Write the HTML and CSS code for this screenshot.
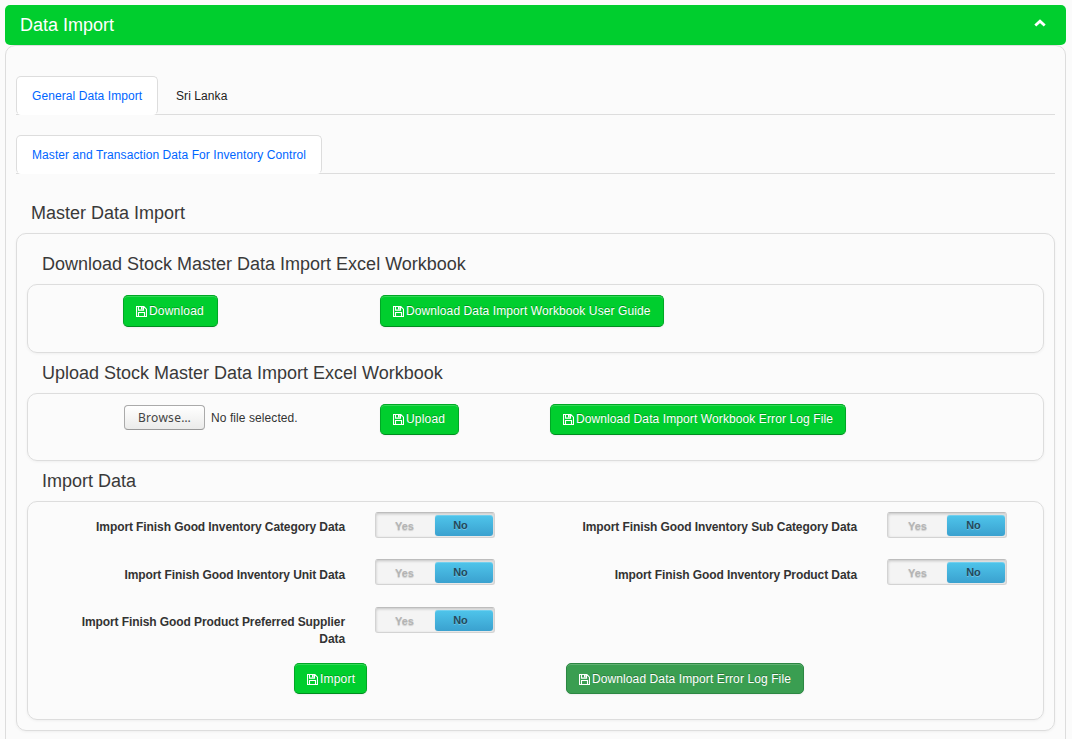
FILE: index.html
```html
<!DOCTYPE html>
<html lang="en">
<head>
<meta charset="utf-8">
<title>Data Import</title>
<link rel="stylesheet" href="styles.css">
</head>
<body>
<svg class="defs" width="0" height="0"><symbol id="save" viewBox="0 0 11 11"><path d="M.5.5h7.3l2.7 2.7v7.3H.5zM2.5.5v3.6h5V.5M2.5 10.5V6.5h6v4" fill="none" stroke="currentColor" stroke-width="1.1"/><path d="M5 1h1.7v2.5H5z" fill="currentColor"/></symbol></svg>
<header class="bar"><h1>Data Import</h1><svg class="chev" viewBox="0 0 12 8"><path d="M1.3 6.6 6 2.2l4.7 4.4" fill="none" stroke="#fff" stroke-width="2.8"/></svg></header>
<main class="panel">
  <nav class="tabs"><a class="tab active t1">General Data Import</a><a class="tab">Sri Lanka</a></nav>
  <nav class="tabs second"><a class="tab active t2">Master and Transaction Data For Inventory Control</a></nav>
  <h2 class="title">Master Data Import</h2>
  <section class="box outer">
    <h3>Download Stock Master Data Import Excel Workbook</h3>
    <div class="box row r1">
      <div class="c1"><button class="btn b1"><svg><use href="#save"/></svg><span>Download</span></button></div>
      <div class="c2"><button class="btn b2"><svg><use href="#save"/></svg><span>Download Data Import Workbook User Guide</span></button></div>
    </div>
    <h3>Upload Stock Master Data Import Excel Workbook</h3>
    <div class="box row r2">
      <div class="c1 file"><button class="browse">Browse…</button><span>No file selected.</span></div>
      <div class="c3"><button class="btn b3"><svg><use href="#save"/></svg><span>Upload</span></button></div>
      <div><button class="btn b4"><svg><use href="#save"/></svg><span>Download Data Import Workbook Error Log File</span></button></div>
    </div>
    <h3>Import Data</h3>
    <div class="box data">
      <div class="fields">
        <label>Import Finish Good Inventory Category Data</label><div class="switch"><span>Yes</span><b>No</b></div>
        <label>Import Finish Good Inventory Sub Category Data</label><div class="switch right"><span>Yes</span><b>No</b></div>
        <label class="low">Import Finish Good Inventory Unit Data</label><div class="switch"><span>Yes</span><b>No</b></div>
        <label class="low">Import Finish Good Inventory Product Data</label><div class="switch right"><span>Yes</span><b>No</b></div>
        <label>Import Finish Good Product Preferred Supplier<br>Data</label><div class="switch"><span>Yes</span><b>No</b></div>
      </div>
      <div class="actions">
        <button class="btn b5"><svg><use href="#save"/></svg><span>Import</span></button>
        <button class="btn b6 dark"><svg><use href="#save"/></svg><span>Download Data Import Error Log File</span></button>
      </div>
    </div>
  </section>
</main>
</body>
</html>
```
FILE: styles.css
```css
* { box-sizing: border-box; }
html { background: #fbfbfb; overflow: hidden; }
body { margin: 0; padding: 5px 6px 0 5px; height: 739px; overflow: hidden; font: 12px/17px "Liberation Sans", Arial, sans-serif; letter-spacing: .08px; color: #333; }
.defs { position: absolute; }
h1, h2, h3 { font-weight: 400; font-size: 18px; line-height: 20px; letter-spacing: 0; margin: 0; color: #393939; white-space: nowrap; }
.bar { height: 40px; background: #00ce2e; border-radius: 5px; display: flex; align-items: center; justify-content: space-between; padding: 0 20px 0 15px; }
.bar h1 { color: #fff; }
.chev { width: 12px; height: 8px; margin-bottom: 4px; }
.panel { border: 1px solid #ddd; border-radius: 10px; padding: 30px 10px 0; height: 720px; }
.tabs { display: flex; height: 39px; border-bottom: 1px solid #ddd; gap: 2px; }
.second { margin-top: 20px; }
.tab { height: 39px; padding: 11px 15px 0; border: 1px solid transparent; white-space: nowrap; color: #222; }
.tab.active { color: #06f; background: #fff; border-color: #ddd; border-bottom-color: #fff; border-radius: 5px; }
.t1 { width: 142px; }
.t2 { width: 306px; }
.title { margin: 29px 0 0 15px; height: 30px; }
.box { border: 1px solid #ddd; border-radius: 10px; box-shadow: 0 1px 3px rgba(0,0,0,.05); }
.outer { height: 498px; padding: 0 10px; }
h3 { height: 40px; padding: 10px 0 0 15px; }
.outer > h3:first-child { height: 50px; padding-top: 20px; }
.row { display: flex; padding-top: 10px; }
.r1 { height: 69px; }
.r2 { height: 68px; }
.c1 { width: 352px; padding-left: 95px; }
.c3 { width: 170px; }
.btn { height: 32px; display: flex; align-items: center; font: 12px/17px "Liberation Sans", Arial, sans-serif; letter-spacing: .1px; color: #fff; background: #00ce2e; border: 1px solid #00a825; border-bottom-color: #008c1f; border-radius: 5px; padding: 0 0 0 12px; gap: 2px; white-space: nowrap; text-shadow: 0 -1px 0 rgba(0,0,0,.25); box-shadow: inset 0 1px 0 rgba(255,255,255,.2), 0 1px 2px rgba(0,0,0,.05); }
.btn svg { width: 11px; height: 11px; flex: none; }
.r2 .btn { height: 31px; padding-bottom: 1px; }
.actions .btn { height: 31px; padding-top: 1px; }
.b1 { width: 95px; }
.b2 { width: 284px; }
.b3 { width: 79px; }
.b4 { width: 296px; }
.b5 { width: 73px; }
.b6 { width: 238px; }
.b1, .b3, .b5 { letter-spacing: .2px; }
.btn.dark { background: #3a9e51; border-color: #2c8743; }
.file { display: flex; align-items: flex-start; gap: 6px; padding: 1px 0 0 96px; }
.file span { padding-top: 5px; }
.browse { width: 81px; height: 25px; padding: 0; font: 12px/20px "Noto Sans", sans-serif; letter-spacing: .3px; color: #444; border: 1px solid #aaa; border-bottom-color: #999; border-radius: 4px; background: linear-gradient(#fff, #ebebea); }
.data { height: 219px; padding-top: 10px; }
.fields { display: grid; grid-template-columns: 317px 150px 362px 150px; grid-template-rows: 47px 48px 56px; }
.fields label { font-weight: 700; letter-spacing: -.09px; text-align: right; white-space: nowrap; padding-top: 7px; }
.fields .low { padding-top: 8px; }
.switch { margin-left: 30px; width: 120px; height: 26px; display: flex; background: #f4f4f4; border: 1px solid #d3d3d3; border-top-color: #bdbdbd; border-radius: 3px; box-shadow: inset 0 1px 3px rgba(0,0,0,.2); padding: 1px; font: bold 11px/23px "Liberation Sans", Arial, sans-serif; letter-spacing: 0; text-align: center; }
.switch span { width: 58px; color: #b4b4b4; text-shadow: 0 1px 1px #ccc; padding: 1px 3px 0 0; }
.switch b { width: 58px; height: 21px; margin-top: 1px; line-height: 21px; padding-right: 7px; border-radius: 3px; color: #23495b; text-shadow: 0 1px rgba(255,255,255,.25); background: linear-gradient(#4fc5eb, #3aa1cf); box-shadow: inset 0 1px rgba(255,255,255,.2), 0 0 1px rgba(0,0,0,.2); }
.switch.right span { padding-right: 1px; }
.switch.right b { padding-right: 5px; }
.actions { display: flex; padding-left: 266px; gap: 199px; }
```
